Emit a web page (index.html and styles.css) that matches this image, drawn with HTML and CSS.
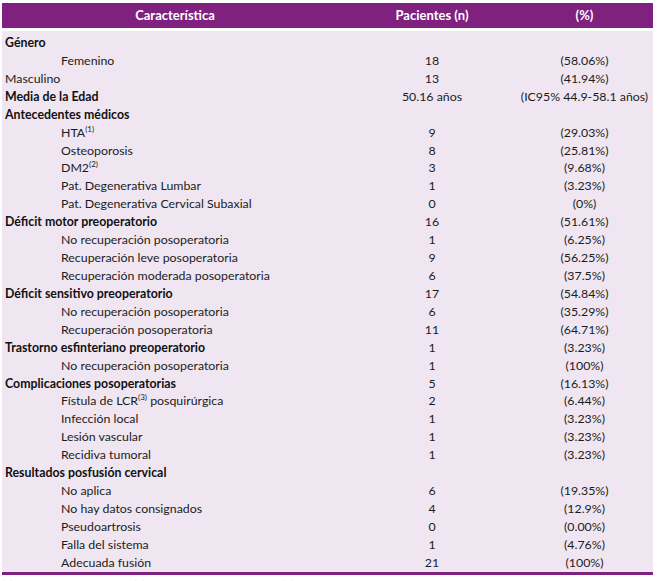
FILE: index.html
```html
<!DOCTYPE html>
<html lang="es">
<head>
<meta charset="utf-8">
<link rel="stylesheet" href="styles.css">
</head>
<body>
<div class="page">
  <div class="table">
    <div class="row head">
      <div class="c1">Característica</div>
      <div class="c2">Pacientes (n)</div>
      <div class="c3">(%)</div>
    </div>
    <div class="tbody">
      <div class="row"><div class="c1 b">Género</div><div class="c2"></div><div class="c3"></div></div>
      <div class="row"><div class="c1 in">Femenino</div><div class="c2">18</div><div class="c3">(58.06%)</div></div>
      <div class="row"><div class="c1">Masculino</div><div class="c2">13</div><div class="c3">(41.94%)</div></div>
      <div class="row"><div class="c1 b">Media de la Edad</div><div class="c2">50.16 años</div><div class="c3">(IC95% 44.9-58.1 años)</div></div>
      <div class="row"><div class="c1 b">Antecedentes médicos</div><div class="c2"></div><div class="c3"></div></div>
      <div class="row"><div class="c1 in">HTA<sup>(1)</sup></div><div class="c2">9</div><div class="c3">(29.03%)</div></div>
      <div class="row"><div class="c1 in">Osteoporosis</div><div class="c2">8</div><div class="c3">(25.81%)</div></div>
      <div class="row"><div class="c1 in">DM2<sup>(2)</sup></div><div class="c2">3</div><div class="c3">(9.68%)</div></div>
      <div class="row"><div class="c1 in">Pat. Degenerativa Lumbar</div><div class="c2">1</div><div class="c3">(3.23%)</div></div>
      <div class="row"><div class="c1 in">Pat. Degenerativa Cervical Subaxial</div><div class="c2">0</div><div class="c3">(0%)</div></div>
      <div class="row"><div class="c1 b">Déficit motor preoperatorio</div><div class="c2">16</div><div class="c3">(51.61%)</div></div>
      <div class="row"><div class="c1 in">No recuperación posoperatoria</div><div class="c2">1</div><div class="c3">(6.25%)</div></div>
      <div class="row"><div class="c1 in">Recuperación leve posoperatoria</div><div class="c2">9</div><div class="c3">(56.25%)</div></div>
      <div class="row"><div class="c1 in">Recuperación moderada posoperatoria</div><div class="c2">6</div><div class="c3">(37.5%)</div></div>
      <div class="row"><div class="c1 b">Déficit sensitivo preoperatorio</div><div class="c2">17</div><div class="c3">(54.84%)</div></div>
      <div class="row"><div class="c1 in">No recuperación posoperatoria</div><div class="c2">6</div><div class="c3">(35.29%)</div></div>
      <div class="row"><div class="c1 in">Recuperación posoperatoria</div><div class="c2">11</div><div class="c3">(64.71%)</div></div>
      <div class="row"><div class="c1 b">Trastorno esfinteriano preoperatorio</div><div class="c2">1</div><div class="c3">(3.23%)</div></div>
      <div class="row"><div class="c1 in">No recuperación posoperatoria</div><div class="c2">1</div><div class="c3">(100%)</div></div>
      <div class="row"><div class="c1 b">Complicaciones posoperatorias</div><div class="c2">5</div><div class="c3">(16.13%)</div></div>
      <div class="row"><div class="c1 in">Fístula de LCR<sup>(3)</sup> posquirúrgica</div><div class="c2">2</div><div class="c3">(6.44%)</div></div>
      <div class="row"><div class="c1 in">Infección local</div><div class="c2">1</div><div class="c3">(3.23%)</div></div>
      <div class="row"><div class="c1 in">Lesión vascular</div><div class="c2">1</div><div class="c3">(3.23%)</div></div>
      <div class="row"><div class="c1 in">Recidiva tumoral</div><div class="c2">1</div><div class="c3">(3.23%)</div></div>
      <div class="row"><div class="c1 b">Resultados posfusión cervical</div><div class="c2"></div><div class="c3"></div></div>
      <div class="row"><div class="c1 in">No aplica</div><div class="c2">6</div><div class="c3">(19.35%)</div></div>
      <div class="row"><div class="c1 in">No hay datos consignados</div><div class="c2">4</div><div class="c3">(12.9%)</div></div>
      <div class="row"><div class="c1 in">Pseudoartrosis</div><div class="c2">0</div><div class="c3">(0.00%)</div></div>
      <div class="row"><div class="c1 in">Falla del sistema</div><div class="c2">1</div><div class="c3">(4.76%)</div></div>
      <div class="row"><div class="c1 in">Adecuada fusión</div><div class="c2">21</div><div class="c3">(100%)</div></div>
    </div>
  </div>
  <p class="note">(1) HTA: hipertensión arterial; (2) DM2: diabetes mellitus tipo 2; (3) LCR: líquido cefalorraquídeo.</p>
</div>
</body>
</html>
```

FILE: styles.css
```css
html, body {
  margin: 0;
  padding: 0;
  background: #ffffff;
}
body {
  font-family: Lato, "Liberation Sans", sans-serif;
  font-size: 12.35px;
  color: #1c1c1c;
}
.page {
  padding: 3px 6px 0 2px;
}
.table {
  width: 651px;
}
.row {
  display: grid;
  grid-template-columns: 346px 168px 1fr;
  height: 17.93px;
  line-height: 17.93px;
  white-space: nowrap;
}
.row .c2, .row .c3 {
  text-align: center;
}
.row .c1 {
  padding-left: 3px;
}
.row .c1.in {
  padding-left: 59px;
}
.b {
  font-weight: bold;
  color: #111;
}
.head {
  background: #80207f;
  color: #ffffff;
  font-weight: bold;
  font-size: 13px;
  height: 25px;
  line-height: 25px;
  margin-bottom: 3px;
}
.head .c1 {
  text-align: center;
  padding-left: 0;
}
.tbody {
  background: #efe6f1;
  padding: 3px 0 0;
  border-bottom: 3px solid #80207f;
}
sup {
  font-size: 8px;
  line-height: 0;
  vertical-align: 5px;
}
.note {
  margin: 3px 0 0;
  font-size: 10px;
  line-height: 12px;
  color: #c8c8c8;
  white-space: nowrap;
}
```
